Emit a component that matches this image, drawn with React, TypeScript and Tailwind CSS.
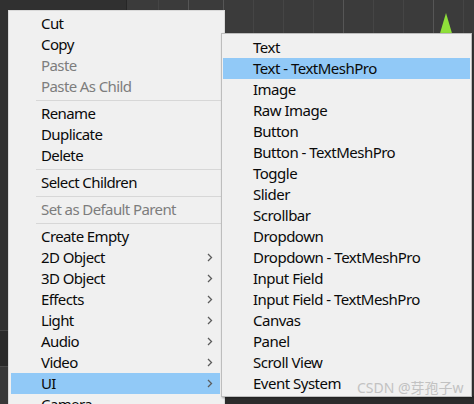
import React from "react";

type Entry =
  | { kind: "item"; label: string; disabled?: boolean; sub?: boolean; active?: boolean }
  | { kind: "sep" };

const hierarchyMenu: Entry[] = [
  { kind: "item", label: "Cut" },
  { kind: "item", label: "Copy" },
  { kind: "item", label: "Paste", disabled: true },
  { kind: "item", label: "Paste As Child", disabled: true },
  { kind: "sep" },
  { kind: "item", label: "Rename" },
  { kind: "item", label: "Duplicate" },
  { kind: "item", label: "Delete" },
  { kind: "sep" },
  { kind: "item", label: "Select Children" },
  { kind: "sep" },
  { kind: "item", label: "Set as Default Parent", disabled: true },
  { kind: "sep" },
  { kind: "item", label: "Create Empty" },
  { kind: "item", label: "2D Object", sub: true },
  { kind: "item", label: "3D Object", sub: true },
  { kind: "item", label: "Effects", sub: true },
  { kind: "item", label: "Light", sub: true },
  { kind: "item", label: "Audio", sub: true },
  { kind: "item", label: "Video", sub: true },
  { kind: "item", label: "UI", sub: true, active: true },
  { kind: "item", label: "Camera" },
];

const uiMenu: { label: string; active?: boolean }[] = [
  { label: "Text" },
  { label: "Text - TextMeshPro", active: true },
  { label: "Image" },
  { label: "Raw Image" },
  { label: "Button" },
  { label: "Button - TextMeshPro" },
  { label: "Toggle" },
  { label: "Slider" },
  { label: "Scrollbar" },
  { label: "Dropdown" },
  { label: "Dropdown - TextMeshPro" },
  { label: "Input Field" },
  { label: "Input Field - TextMeshPro" },
  { label: "Canvas" },
  { label: "Panel" },
  { label: "Scroll View" },
  { label: "Event System" },
];

function Chevron() {
  return (
    <svg width="6" height="9" viewBox="0 0 6 9" className="shrink-0">
      <polyline points="1,1 4.5,4.5 1,8" fill="none" stroke="#5c5c5c" strokeWidth="1.3" />
    </svg>
  );
}

// Scene view and hierarchy panel visible behind the menus
function EditorBackdrop() {
  return (
    <svg className="absolute inset-0" width="474" height="404" viewBox="0 0 474 404">
      <rect x="0" y="0" width="474" height="404" fill="#3b3b3b" />
      <rect x="0" y="0" width="126" height="404" fill="#303030" />
      <rect x="0" y="330" width="8" height="36" fill="#2a2a2a" />
      <rect x="0" y="366" width="8" height="38" fill="#383838" />
      <line x1="0" y1="330.5" x2="8" y2="330.5" stroke="#444" />
      <line x1="0" y1="366.5" x2="8" y2="366.5" stroke="#4a4a4a" />
      <line x1="126.5" y1="0" x2="126.5" y2="404" stroke="#262626" />
      {[158, 188, 223, 253, 283, 313, 343, 373, 403, 433, 463].map((x) => (
        <line
          key={x}
          x1={x + 0.5}
          y1="0"
          x2={x + 0.5}
          y2="404"
          stroke={x === 188 || x === 223 || x === 343 || x === 433 ? "#565656" : "#454545"}
        />
      ))}
      <polygon points="446,13 438,40 454,40" fill="#8fe03a" />
      <rect x="225" y="396" width="249" height="8" fill="#2c2c2c" />
    </svg>
  );
}

export default function App() {
  const font = "font-['Noto_Sans','Noto_Sans_CJK_SC',sans-serif]";
  return (
    <div className={`relative w-[474px] h-[404px] overflow-hidden bg-[#3b3b3b] ${font}`}>
      <EditorBackdrop />

      {/* Hierarchy context menu */}
      <div className="absolute left-[8px] top-[10px] w-[217px] h-[420px] bg-[#f0f0f0] border border-[#d9d9d9] pt-[2px]">
        {hierarchyMenu.map((e, i) =>
          e.kind === "sep" ? (
            <div key={i} className="h-[6px] flex items-center pl-[27px]">
              <div className="h-px w-full bg-[#d7d7d7]" />
            </div>
          ) : (
            <div
              key={i}
              className={`h-[21px] ml-[2px] mr-[4px] pl-[30px] pr-[7px] flex items-center justify-between text-[15px] tracking-[-0.6px] leading-none ${
                e.active ? "bg-[#91c9f7]" : ""
              } ${e.disabled ? "text-[#7d7d7d]" : "text-[#0a0a0a]"}`}
            >
              <span>{e.label}</span>
              {e.sub && <Chevron />}
            </div>
          )
        )}
      </div>

      {/* UI submenu */}
      <div className="absolute left-[221px] top-[33px] w-[251px] bg-[#f0f0f0] border border-[#bdbdbd] pt-[3px] pb-[2px] shadow-[1px_1px_2px_rgba(0,0,0,0.35)]">
        {uiMenu.map((it) => (
          <div
            key={it.label}
            className={`h-[21px] ml-[1px] mr-[1px] pl-[30px] flex items-center text-[15px] tracking-[-0.5px] leading-none text-[#0a0a0a] ${
              it.active ? "bg-[#91c9f7]" : ""
            }`}
          >
            {it.label}
          </div>
        ))}
      </div>

      <div className="absolute left-[357px] top-[381px] text-[14px] leading-none text-[#c2c2c2]">
        CSDN @芽孢子w
      </div>
    </div>
  );
}
